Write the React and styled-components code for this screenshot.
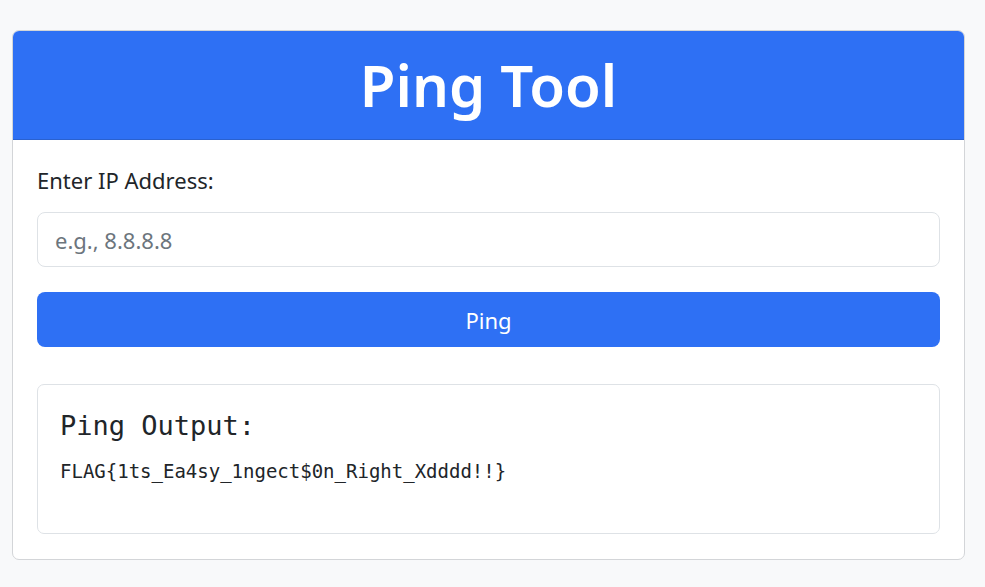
import React, { useState } from 'react'
import styled, { createGlobalStyle } from 'styled-components'

const GlobalStyle = createGlobalStyle`
  body {
    margin: 0;
    background-color: #f8f9fa;
    font-family: "Noto Sans", "Open Sans", sans-serif;
    color: #212529;
  }
`

const Page = styled.div`
  padding: 30px 20px 27px 12px;
`

const Card = styled.div`
  background: #fff;
  border: 1px solid #d3d5d8;
  border-radius: 7px;
  overflow: hidden;
`

const CardHeader = styled.div`
  background-color: #2e70f4;
  border-bottom: 1px solid #2a61cf;
  padding: 16px;
  text-align: center;
`

const Title = styled.h1`
  margin: 0;
  color: #fff;
  font-size: 58px;
  font-weight: 600;
  line-height: 76px;
`

const CardBody = styled.div`
  padding: 24px 24px 25px;
`

const Label = styled.label`
  display: block;
  font-size: 22px;
  line-height: 32px;
  margin-bottom: 16px;
`

const TextInput = styled.input`
  display: block;
  box-sizing: border-box;
  width: 100%;
  height: 55px;
  padding: 0 17px;
  font-family: inherit;
  font-size: 22px;
  color: #212529;
  border: 1px solid #dee2e6;
  border-radius: 8px;
  outline: none;

  &::placeholder {
    color: #6c757d;
  }
`

const PingButton = styled.button`
  display: block;
  width: 100%;
  height: 55px;
  margin-top: 25px;
  background-color: #2e70f4;
  border: none;
  border-radius: 8px;
  color: #fff;
  font-family: inherit;
  font-size: 22px;
  cursor: pointer;
`

const OutputBox = styled.div`
  margin-top: 37px;
  min-height: 150px;
  box-sizing: border-box;
  border: 1px solid #dee2e6;
  border-radius: 7px;
  padding: 24px 22px;
`

const OutputTitle = styled.h3`
  margin: 0 0 15px;
  font-family: "DejaVu Sans Mono", "Liberation Mono", monospace;
  font-size: 27px;
  font-weight: 400;
  line-height: 34px;
`

const OutputText = styled.pre`
  margin: 0;
  font-family: "DejaVu Sans Mono", "Liberation Mono", monospace;
  font-size: 19px;
  line-height: 26px;
`

export default function App () {
  const [ip, setIp] = useState('')
  return (
    <Page>
      <GlobalStyle />
      <Card>
        <CardHeader>
          <Title>Ping Tool</Title>
        </CardHeader>
        <CardBody>
          <Label htmlFor='ip'>Enter IP Address:</Label>
          <TextInput id='ip' type='text' placeholder='e.g., 8.8.8.8'
            value={ip} onChange={(e) => setIp(e.target.value)} />
          <PingButton>Ping</PingButton>
          <OutputBox>
            <OutputTitle>Ping Output:</OutputTitle>
            <OutputText>FLAG{'{'}1ts_Ea4sy_1ngect$0n_Right_Xdddd!!{'}'}</OutputText>
          </OutputBox>
        </CardBody>
      </Card>
    </Page>
  )
}
